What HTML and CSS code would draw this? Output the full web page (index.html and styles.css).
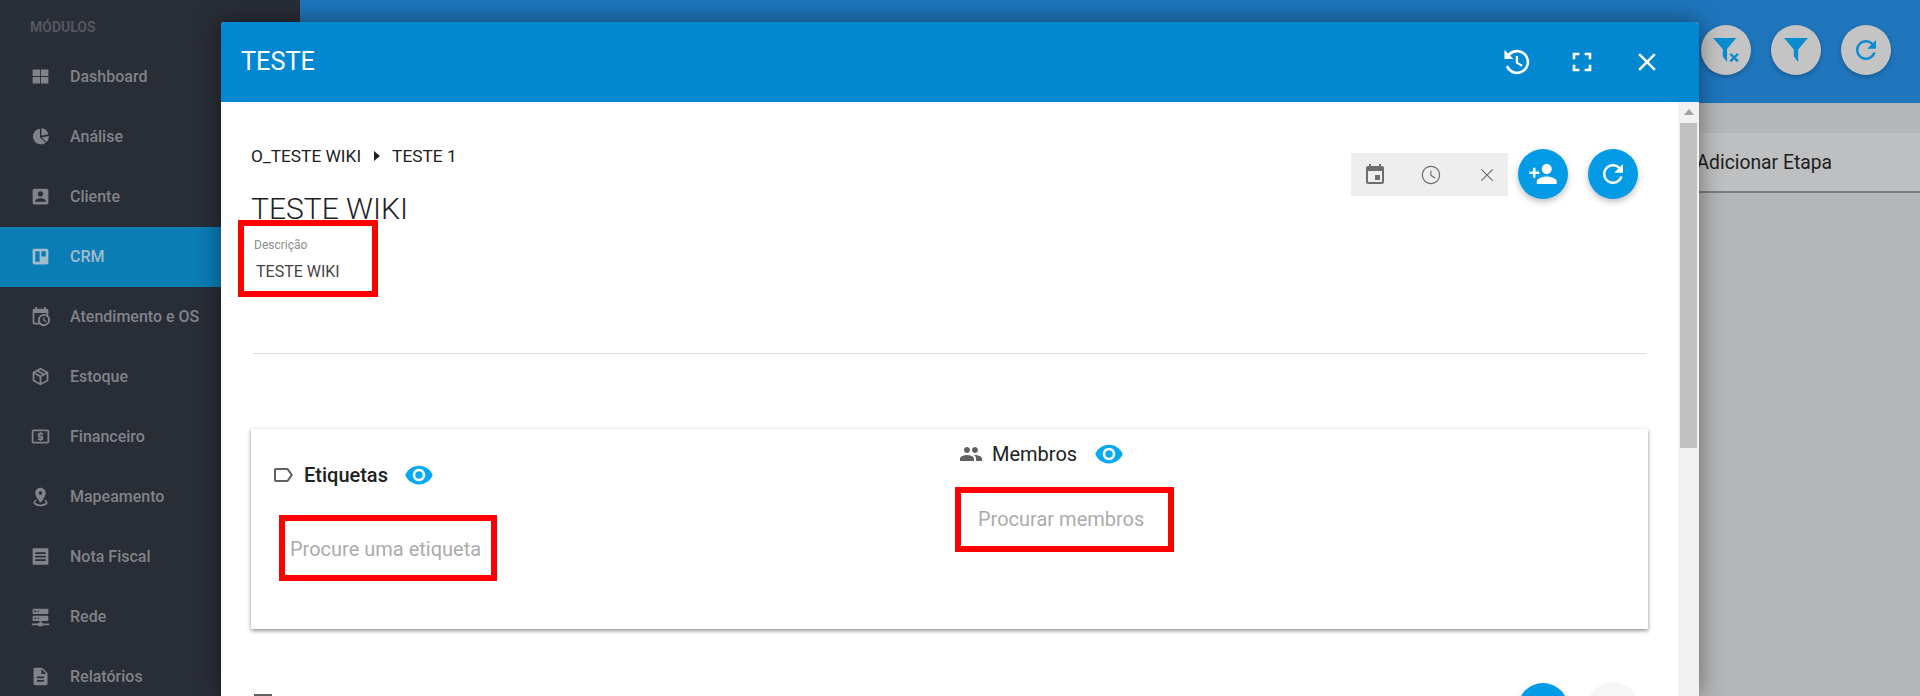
FILE: index.html
```html
<!DOCTYPE html>
<html lang="pt">
<head>
<meta charset="utf-8">
<title>CRM</title>
<link rel="stylesheet" href="styles.css">
</head>
<body>
<svg class="sprite" xmlns="http://www.w3.org/2000/svg">
  <symbol id="i-dash" viewBox="0 0 24 24"><path d="M3 4h8.500v7.500H3zM12.500 4H21v7.500h-8.500zM3 12.500h8.500V20H3zM12.500 12.500H21V20h-8.500z"/></symbol>
  <symbol id="i-pie" viewBox="0 0 24 24"><path d="M11.400 3A9 9 0 1 0 18 19L11.400 13zM13 2.500V11l8-1.500A9 9 0 0 0 13 2.500zM13 13l6 5.500a9 9 0 0 0 2.500-7z"/></symbol>
  <symbol id="i-contact" viewBox="0 0 24 24"><path d="M3 5v14c0 1.100.89 2 2 2h14c1.100 0 2-.9 2-2V5c0-1.100-.9-2-2-2H5c-1.110 0-2 .9-2 2zm12 4c0 1.660-1.340 3-3 3s-3-1.340-3-3 1.340-3 3-3 3 1.340 3 3zm-9 8c0-2 4-3.100 6-3.100s6 1.100 6 3.100v1H6v-1z"/></symbol>
  <symbol id="i-board" viewBox="0 0 24 24"><path d="M19 3H5c-1.100 0-2 .9-2 2v14c0 1.100.9 2 2 2h14c1.100 0 2-.9 2-2V5c0-1.100-.9-2-2-2zm-8 15H6V6h5v12zm7-6h-5V6h5v6z"/></symbol>
  <symbol id="i-calclock" viewBox="0 0 24 24"><path d="M15,13H16.5V15.82L18.94,17.23L18.19,18.53L15,16.69V13M19,8H5V19H9.67C9.24,18.09 9,17.07 9,16A7,7 0 0,1 16,9C17.07,9 18.09,9.24 19,9.67V8M5,21C3.89,21 3,20.1 3,19V5C3,3.89 3.89,3 5,3H6V1H8V3H16V1H18V3H19A2,2 0 0,1 21,5V11.1C22.24,12.36 23,14.09 23,16A7,7 0 0,1 16,23C14.09,23 12.36,22.24 11.1,21H5M16,11.15A4.85,4.85 0 0,0 11.15,16C11.15,18.68 13.32,20.85 16,20.85A4.85,4.85 0 0,0 20.85,16C20.85,13.32 18.68,11.15 16,11.15Z"/></symbol>
  <symbol id="i-box" viewBox="0 0 24 24"><path d="M21,16.5C21,16.88 20.79,17.21 20.47,17.38L12.57,21.82C12.41,21.94 12.21,22 12,22C11.79,22 11.59,21.94 11.43,21.82L3.53,17.38C3.21,17.21 3,16.88 3,16.5V7.5C3,7.12 3.21,6.79 3.53,6.62L11.43,2.18C11.59,2.06 11.79,2 12,2C12.21,2 12.41,2.06 12.57,2.18L20.47,6.62C20.79,6.79 21,7.12 21,7.5V16.5M12,4.15L10.11,5.22L16,8.61L17.96,7.5L12,4.15M6.04,7.5L12,10.85L13.96,9.75L8.08,6.35L6.04,7.5M5,15.91L11,19.29V12.58L5,9.21V15.91M19,15.91V9.21L13,12.58V19.29L19,15.91Z"/></symbol>
  <symbol id="i-money" viewBox="0 0 24 24"><path d="M11 17h2v-1h1c.55 0 1-.45 1-1v-3c0-.55-.45-1-1-1h-3v-1h4V8h-2V7h-2v1h-1c-.55 0-1 .45-1 1v3c0 .55.45 1 1 1h3v1H9v2h2v1zm9-13H4c-1.110 0-1.990.89-1.990 2L2 18c0 1.110.89 2 2 2h16c1.110 0 2-.89 2-2V6c0-1.110-.89-2-2-2zm0 14H4V6h16v12z"/></symbol>
  <symbol id="i-pin" viewBox="0 0 24 24"><path d="M12,2C15.31,2 18,4.66 18,7.95C18,12.41 12,19 12,19C12,19 6,12.41 6,7.95C6,4.66 8.69,2 12,2M12,6A2,2 0 0,0 10,8A2,2 0 0,0 12,10A2,2 0 0,0 14,8A2,2 0 0,0 12,6M20,19C20,21.21 16.42,23 12,23C7.58,23 4,21.21 4,19C4,17.71 5.22,16.56 7.11,15.83L7.75,16.74C6.67,17.19 6,17.81 6,18.5C6,19.88 8.69,21 12,21C15.31,21 18,19.88 18,18.5C18,17.81 17.33,17.19 16.25,16.74L16.89,15.83C18.78,16.56 20,17.71 20,19Z"/></symbol>
  <symbol id="i-receipt" viewBox="0 0 24 24"><path d="M3 2.500h18V21.500H3zM6 7v2h12V7zM6 11v2h12v-2zM6 15v2h12v-2z" fill-rule="evenodd"/></symbol>
  <symbol id="i-server" viewBox="0 0 24 24"><path d="M13,19H14A1,1 0 0,1 15,20H22V22H15A1,1 0 0,1 14,23H10A1,1 0 0,1 9,22H2V20H9A1,1 0 0,1 10,19H11V17H4A1,1 0 0,1 3,16V12A1,1 0 0,1 4,11H20A1,1 0 0,1 21,12V16A1,1 0 0,1 20,17H13V19M4,3H20A1,1 0 0,1 21,4V8A1,1 0 0,1 20,9H4A1,1 0 0,1 3,8V4A1,1 0 0,1 4,3M9,7H10V5H9V7M9,15H10V13H9V15M5,5V7H7V5H5M5,13V15H7V13H5Z"/></symbol>
  <symbol id="i-doc" viewBox="0 0 24 24"><path d="M14 2H6c-1.100 0-1.990.9-1.990 2L4 20c0 1.100.89 2 1.990 2H18c1.100 0 2-.9 2-2V8l-6-6zm2 16H8v-2h8v2zm0-4H8v-2h8v2zm-3-5V3.500L18.500 9H13z"/></symbol>
  <symbol id="i-history" viewBox="0 0 24 24"><path d="M12 2.800a9.200 9.200 0 1 1-8.500 12.700l1.900-.8A7.150 7.150 0 1 0 6.800 7.100L9.400 9.700H2.600V2.900l2.700 2.700A9.200 9.200 0 0 1 12 2.800zM11.100 7.500h1.700v4.600l3.500 2.100-.9 1.400-4.300-2.600z"/></symbol>
  <symbol id="i-full" viewBox="0 0 24 24"><path d="M7 14H5v5h5v-2H7v-3zm-2-4h2V7h3V5H5v5zm12 7h-3v2h5v-5h-2v3zM14 5v2h3v3h2V5h-5z"/></symbol>
  <symbol id="i-close" viewBox="0 0 24 24"><path d="M19 6.410L17.590 5 12 10.590 6.410 5 5 6.410 10.590 12 5 17.590 6.410 19 12 13.410 17.590 19 19 17.590 13.410 12z"/></symbol>
  <symbol id="i-refresh" viewBox="0 0 24 24"><path d="M17.650 6.350C16.200 4.900 14.210 4 12 4c-4.420 0-7.990 3.580-7.990 8s3.570 8 7.990 8c3.730 0 6.840-2.550 7.730-6h-2.080c-.82 2.330-3.040 4-5.650 4-3.310 0-6-2.690-6-6s2.690-6 6-6c1.660 0 3.140.69 4.220 1.780L13 11h7V4l-2.350 2.350z"/></symbol>
  <symbol id="i-funnel" viewBox="0 0 24 24"><path d="M1 1h22l-9 10.500V23l-4-5v-6.500z"/></symbol>
  <symbol id="i-funnelx" viewBox="0 0 24 24"><path d="M0 1h21.500l-8.500 10v12l-4-5v-7z"/><path d="M16 15.500l7 7m0-7l-7 7" fill="none" stroke="currentColor" stroke-width="2.200"/></symbol>
  <symbol id="i-addperson" viewBox="0 0 24 24"><path d="M15 12c2.210 0 4-1.790 4-4s-1.790-4-4-4-4 1.790-4 4 1.790 4 4 4zm-9-2V7H4v3H1v2h3v3h2v-3h3v-2H6zm9 4c-2.670 0-8 1.340-8 4v2h16v-2c0-2.660-5.330-4-8-4z"/></symbol>
  <symbol id="i-event" viewBox="0 0 24 24"><path d="M17 12h-5v5h5v-5zM16 1v2H8V1H6v2H5c-1.110 0-1.990.9-1.990 2L3 19c0 1.100.89 2 2 2h14c1.100 0 2-.9 2-2V5c0-1.100-.9-2-2-2h-1V1h-2zm3 18H5V8h14v11z"/></symbol>
  <symbol id="i-clock" viewBox="0 0 24 24"><path d="M11.990 2C6.470 2 2 6.480 2 12s4.470 10 9.990 10C17.520 22 22 17.520 22 12S17.520 2 11.990 2zM12 20.700c-4.800 0-8.700-3.900-8.700-8.700S7.200 3.300 12 3.300s8.700 3.900 8.700 8.700-3.900 8.700-8.700 8.700zm.5-13.700H11.300v5.700l4.800 3 .7-1.100-4.300-2.600z"/></symbol>
  <symbol id="i-thinx" viewBox="0 0 24 24"><path d="M5.700 4.700L12 11l6.300-6.300 1 1L13 12l6.300 6.300-1 1L12 13l-6.300 6.300-1-1L11 12 4.700 5.700z"/></symbol>
  <symbol id="i-label" viewBox="0 0 24 24"><path d="M17.630 5.840C17.270 5.330 16.670 5 16 5L5 5.010C3.900 5.010 3 5.900 3 7v10c0 1.100.9 1.990 2 1.990L16 19c.67 0 1.270-.33 1.630-.84L22 12l-4.370-6.160zM16 17H5V7h11l3.550 5L16 17z"/></symbol>
  <symbol id="i-group" viewBox="0 0 24 24"><path d="M16 11c1.660 0 2.990-1.340 2.990-3S17.660 5 16 5c-1.660 0-3 1.340-3 3s1.340 3 3 3zm-8 0c1.660 0 2.990-1.340 2.990-3S9.660 5 8 5C6.340 5 5 6.340 5 8s1.340 3 3 3zm0 2c-2.330 0-7 1.170-7 3.500V19h14v-2.500c0-2.330-4.670-3.500-7-3.500zm8 0c-.29 0-.62.02-.97.05 1.160.84 1.970 1.970 1.970 3.450V19h6v-2.500c0-2.330-4.670-3.500-7-3.500z"/></symbol>
  <symbol id="i-eye" viewBox="0 0 24 24"><path d="M12 4.500C7 4.500 2.730 7.610 1 12c1.730 4.390 6 7.500 11 7.500s9.270-3.110 11-7.500c-1.730-4.390-6-7.500-11-7.500zM12 17c-2.760 0-5-2.240-5-5s2.240-5 5-5 5 2.240 5 5-2.240 5-5 5zm0-8c-1.660 0-3 1.340-3 3s1.340 3 3 3 3-1.340 3-3-1.340-3-3-3z"/></symbol>
  <symbol id="i-list" viewBox="0 0 24 24"><path d="M3 3h18v18H3z"/></symbol>
</svg>

<div class="app">
  <aside class="sidebar">
    <div class="side-title">MÓDULOS</div>
    <nav class="nav">
      <a class="nav-item"><svg class="nav-ico"><use href="#i-dash"/></svg>Dashboard</a>
      <a class="nav-item"><svg class="nav-ico"><use href="#i-pie"/></svg>Análise</a>
      <a class="nav-item"><svg class="nav-ico"><use href="#i-contact"/></svg>Cliente</a>
      <a class="nav-item active"><svg class="nav-ico"><use href="#i-board"/></svg>CRM</a>
      <a class="nav-item"><svg class="nav-ico"><use href="#i-calclock"/></svg>Atendimento e OS</a>
      <a class="nav-item"><svg class="nav-ico"><use href="#i-box"/></svg>Estoque</a>
      <a class="nav-item"><svg class="nav-ico"><use href="#i-money"/></svg>Financeiro</a>
      <a class="nav-item"><svg class="nav-ico"><use href="#i-pin"/></svg>Mapeamento</a>
      <a class="nav-item"><svg class="nav-ico"><use href="#i-receipt"/></svg>Nota Fiscal</a>
      <a class="nav-item"><svg class="nav-ico"><use href="#i-server"/></svg>Rede</a>
      <a class="nav-item"><svg class="nav-ico"><use href="#i-doc"/></svg>Relatórios</a>
    </nav>
  </aside>

  <main class="main">
    <header class="topbar">
      <button class="top-btn"><svg class="top-ico"><use href="#i-funnelx"/></svg></button>
      <button class="top-btn"><svg class="top-ico"><use href="#i-funnel"/></svg></button>
      <button class="top-btn"><svg class="top-ico small"><use href="#i-refresh"/></svg></button>
    </header>
    <section class="stage">
      <div class="stage-card">Adicionar Etapa</div>
    </section>
  </main>

  <div class="modal">
    <div class="modal-header">
      <h2 class="modal-title">TESTE</h2>
      <div class="modal-actions">
        <svg class="head-ico"><use href="#i-history"/></svg>
        <svg class="head-ico"><use href="#i-full"/></svg>
        <svg class="head-ico close"><use href="#i-close"/></svg>
      </div>
    </div>
    <div class="modal-body">
      <div class="content">
        <div class="head-row">
          <div class="head-left">
            <div class="crumbs"><span>O_TESTE WIKI</span><i class="caret"></i><span>TESTE 1</span></div>
            <h1 class="task-title">TESTE WIKI</h1>
            <div class="mark mark-desc">
              <div class="desc-label">Descrição</div>
              <div class="desc-value">TESTE WIKI</div>
            </div>
          </div>
          <div class="tools">
            <div class="date-box">
              <svg class="date-ico"><use href="#i-event"/></svg>
              <svg class="date-ico clock"><use href="#i-clock"/></svg>
              <svg class="date-ico thin"><use href="#i-thinx"/></svg>
            </div>
            <button class="fab"><svg class="fab-ico"><use href="#i-addperson"/></svg></button>
            <button class="fab"><svg class="fab-ico"><use href="#i-refresh"/></svg></button>
          </div>
        </div>
        <hr class="divider">
        <div class="card">
          <div class="col col-left">
            <div class="col-head">
              <svg class="col-ico"><use href="#i-label"/></svg>
              <span class="col-name strong">Etiquetas</span>
              <svg class="eye"><use href="#i-eye"/></svg>
            </div>
            <div class="mark mark-tags"><span class="ph">Procure uma etiqueta</span></div>
          </div>
          <div class="col col-right">
            <div class="col-head">
              <svg class="col-ico"><use href="#i-group"/></svg>
              <span class="col-name">Membros</span>
              <svg class="eye"><use href="#i-eye"/></svg>
            </div>
            <div class="mark mark-members"><span class="ph">Procurar membros</span></div>
          </div>
        </div>
        <div class="next-row">
          <svg class="next-ico"><use href="#i-list"/></svg>
          <div class="next-tools">
            <button class="fab"></button>
            <button class="fab ghost"></button>
          </div>
        </div>
      </div>
      <div class="scrollbar">
        <div class="scroll-arrow"></div>
        <div class="scroll-thumb"></div>
      </div>
    </div>
  </div>
</div>
</body>
</html>
```

FILE: styles.css
```css
* { box-sizing: border-box; }
html, body { margin: 0; padding: 0; height: 100%; }
body { font-family: Roboto, "Liberation Sans", sans-serif; overflow: hidden; background: #b5b6b8; }
.sprite { display: none; }
svg { fill: currentColor; display: block; }
button { border: 0; padding: 0; font: inherit; }
h1, h2 { margin: 0; }

.app { position: relative; display: flex; width: 1920px; height: 696px; overflow: hidden; }

/* Sidebar */
.sidebar { width: 300px; flex: none; background: #292d36; color: #818388; }
.side-title { height: 47px; padding: 18px 0 0 30px; font-size: 14px; font-weight: 700; line-height: 18px; color: #54575e; }
.nav { display: flex; flex-direction: column; }
.nav-item { display: flex; align-items: center; height: 60px; padding: 0 0 2px 29.500px; font-size: 16px; font-weight: 500; }
.nav-item.active { background: #0a7db5; color: #a3bccb; }
.nav-ico { width: 21px; height: 21px; margin-right: 19.500px; flex: none; }

/* Page behind the modal */
.main { flex: 1; display: flex; flex-direction: column; min-width: 0; }
.topbar { height: 103px; flex: none; background: #1f76bd; display: flex; justify-content: flex-end; gap: 20px; padding: 25px 29px 0 0; }
.top-btn { width: 50px; height: 50px; border-radius: 50%; background: #c4c4c4; color: #0a8ccf; display: flex; align-items: center; justify-content: center; box-shadow: 0 2px 5px rgba(0,0,0,.25); }
.top-ico { width: 26px; height: 26px; }
.top-ico.small { width: 30px; height: 30px; }
.stage { flex: 1; padding-top: 30px; }
.stage-card { height: 60px; display: flex; align-items: center; justify-content: flex-end; padding-right: 88px; background: #bebfc1; border-bottom: 2px solid #7c7d7e; font-size: 19.300px; font-weight: 400; color: #1d1d1d; }

/* Modal */
.modal { position: absolute; left: 221px; top: 22px; width: 1478px; height: 674px; display: flex; flex-direction: column; background: #fff; border-radius: 4px 4px 0 0; box-shadow: 0 0 24px rgba(0,0,0,.45); }
.modal-header { height: 80px; flex: none; background: #0288d1; color: #fff; border-radius: 4px 4px 0 0; display: flex; align-items: center; justify-content: space-between; padding: 0 36px 0 20px; }
.modal-title { font-size: 25.300px; font-weight: 400; line-height: 28px; }
.modal-actions { display: flex; gap: 33px; align-items: center; }
.head-ico { width: 32px; height: 32px; }
.head-ico.close { width: 30px; height: 30px; margin: 0 1px; }

.modal-body { flex: 1; display: flex; min-height: 0; overflow: hidden; }
.content { flex: 1; min-width: 0; padding: 44px 30px 0; }

.head-row { display: flex; justify-content: space-between; height: 207px; }
.crumbs { display: flex; align-items: center; height: 20px; font-size: 17.300px; color: #212121; }
.caret { width: 0; height: 0; margin: 0 12px 0 13px; border-left: 6px solid #212121; border-top: 5px solid transparent; border-bottom: 5px solid transparent; }
.task-title { margin-top: 23px; font-size: 30px; font-weight: 300; line-height: 40px; color: #212121; }
.mark { border: 6px solid #f00; }
.mark-desc { width: 140px; height: 77px; margin: -9px 0 0 -13px; padding: 11px 0 0 10px; }
.desc-label { font-size: 12px; line-height: 16px; color: #8e8e8e; }
.desc-value { margin: 9px 0 0 2px; font-size: 16px; line-height: 20px; color: #444; }

.tools { display: flex; align-items: flex-start; padding: 3px 10px 0 0; }
.date-box { width: 157px; height: 43px; margin: 4px 10px 0 0; background: #eee; color: #6e6e6e; display: flex; align-items: center; gap: 32px; padding-left: 12px; }
.date-ico { width: 24px; height: 24px; }
.date-ico.clock { width: 22px; height: 22px; margin: 0 1px; }
.date-ico.thin { width: 20px; height: 20px; margin: 0 2px; }
.fab { width: 50px; height: 50px; flex: none; border-radius: 50%; background: #039be5; color: #fff; display: flex; align-items: center; justify-content: center; box-shadow: 0 3px 6px rgba(0,0,0,.25); }
.fab + .fab { margin-left: 20px; }
.fab.ghost { background: #f6f6f6; box-shadow: 0 0 2px rgba(0,0,0,.1); }
.fab-ico { width: 30px; height: 30px; }

.divider { margin: 0 2px; height: 1px; border: 0; background: #ddd; }

.card { margin-top: 75px; height: 200px; display: grid; grid-template-columns: 686px 1fr; background: #fff; box-shadow: 0 2px 4px rgba(0,0,0,.4), 0 0 3px rgba(0,0,0,.08); }
.col-left { padding: 32px 0 0 20px; }
.col-right { padding: 11px 0 0 22px; }
.col-head { display: flex; align-items: center; height: 28px; }
.col-ico { width: 24px; height: 24px; color: #616161; flex: none; }
.col-name { margin-left: 9px; font-size: 20px; font-weight: 400; color: #212121; }
.col-name.strong { font-weight: 500; }
.eye { width: 30px; height: 30px; margin-left: 16px; color: #03a9f4; flex: none; }
.col-right .eye { margin-left: 17px; }
.mark-tags { width: 218px; height: 66px; margin: 26px 0 0 8px; padding: 2px 0 0 5px; display: flex; align-items: center; }
.mark-members { width: 219px; height: 65px; margin: 19px 0 0 -4px; padding: 0 0 1px 17px; display: flex; align-items: center; }
.ph { font-size: 20px; color: #ababab; white-space: nowrap; }

.next-row { display: flex; justify-content: space-between; align-items: flex-start; margin-top: 54px; }
.next-ico { width: 24px; height: 24px; color: #616161; margin-top: 8px; }
.next-tools { display: flex; padding-right: 10px; }

.scrollbar { width: 21px; flex: none; background: #f1f1f1; display: flex; flex-direction: column; align-items: center; }
.scroll-arrow { height: 21px; width: 100%; display: flex; }
.scroll-arrow::before { content: ""; margin: 7px auto 0; width: 0; height: 0; border-left: 5px solid transparent; border-right: 5px solid transparent; border-bottom: 6px solid #a3a3a3; }
.scroll-thumb { width: 17px; height: 325px; background: #c1c1c1; }
```
